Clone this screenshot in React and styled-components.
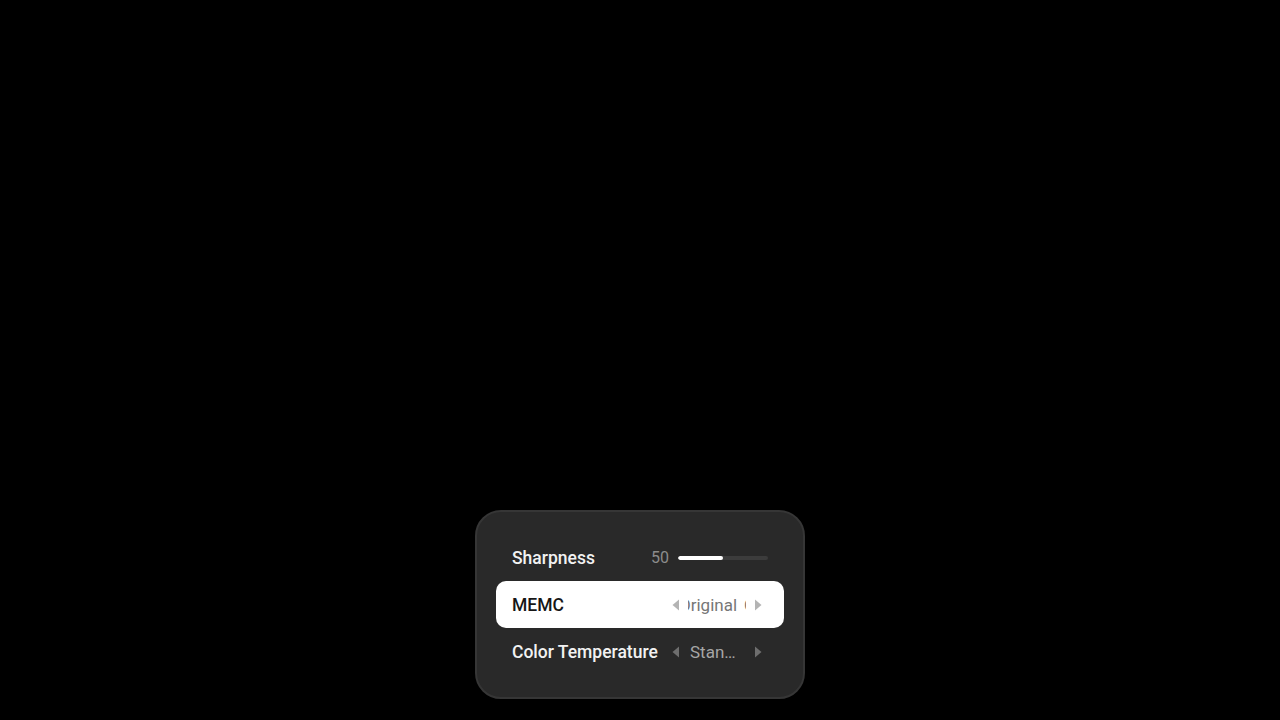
import React from "react";
import styled, { createGlobalStyle } from "styled-components";

const Global = createGlobalStyle`
  html, body { margin: 0; padding: 0; background: #000; }
  body { font-family: Roboto, "Noto Sans", Arial, sans-serif; }
  * { box-sizing: border-box; }
`;

const Screen = styled.div`
  width: 100%;
  height: 720px;
  display: flex;
  flex-direction: column;
  align-items: center;
  justify-content: flex-end;
  padding-bottom: 21px;
  background: #000;
`;

const Panel = styled.div`
  width: 330px;
  padding: 22px 19px;
  background: #292929;
  border: 2px solid #363636;
  border-radius: 26px;
  display: flex;
  flex-direction: column;
`;

const Row = styled.div`
  height: 47px;
  padding: 0 16px;
  display: flex;
  align-items: center;
  justify-content: space-between;
  border-radius: 10px;
  background: ${(p) => (p.$active ? "#ffffff" : "transparent")};
`;

const Label = styled.span`
  font-size: 17.5px;
  font-weight: 500;
  color: ${(p) => (p.$active ? "#161616" : "#f2f2f2")};
  white-space: nowrap;
`;

const SliderWrap = styled.div`
  display: flex;
  align-items: center;
  gap: 9px;
`;

const Num = styled.span`
  font-size: 16px;
  color: #8c8c8c;
`;

const Track = styled.div`
  width: 90px;
  height: 4px;
  border-radius: 2px;
  background: #3c3c3c;
  overflow: hidden;
`;

const Fill = styled.div`
  height: 100%;
  border-radius: 2px;
  background: #fff;
`;

const Selector = styled.div`
  width: 96px;
  display: flex;
  align-items: center;
  gap: 8px;
  padding-right: 6px;
`;

const Arrow = styled.svg`
  width: 8px;
  height: 12px;
  flex: none;
  fill: ${(p) => (p.$active ? "#b4b4b4" : "#6e6e6e")};
`;

const ValueBox = styled.div`
  flex: 1;
  min-width: 0;
  overflow: hidden;
  font-size: 17px;
  color: ${(p) => (p.$active ? "#767676" : "#a6a6a6")};
  white-space: nowrap;
`;

const Marquee = styled.div`
  display: flex;
  gap: 7px;
  width: max-content;
  transform: translateX(-9px);
`;

const Ellipsis = styled.div`
  overflow: hidden;
  text-overflow: ellipsis;
  padding: 0 6px 0 2px;
`;

const Left = ({ active }) => (
  <Arrow $active={active} viewBox="0 0 8 12">
    <path d="M7 0.5 L7 11.5 L0.5 6 Z" />
  </Arrow>
);
const Right = ({ active }) => (
  <Arrow $active={active} viewBox="0 0 8 12">
    <path d="M1 0.5 L1 11.5 L7.5 6 Z" />
  </Arrow>
);

export default function App() {
  return (
    <>
      <Global />
      <Screen>
        <Panel>
          <Row>
            <Label>Sharpness</Label>
            <SliderWrap>
              <Num>50</Num>
              <Track>
                <Fill style={{ width: "50%" }} />
              </Track>
            </SliderWrap>
          </Row>
          <Row $active>
            <Label $active>MEMC</Label>
            <Selector>
              <Left active />
              <ValueBox $active>
                <Marquee>
                  <span>Original</span>
                  <span>Original</span>
                </Marquee>
              </ValueBox>
              <Right active />
            </Selector>
          </Row>
          <Row>
            <Label>Color Temperature</Label>
            <Selector>
              <Left />
              <ValueBox>
                <Ellipsis>Standard</Ellipsis>
              </ValueBox>
              <Right />
            </Selector>
          </Row>
        </Panel>
      </Screen>
    </>
  );
}
